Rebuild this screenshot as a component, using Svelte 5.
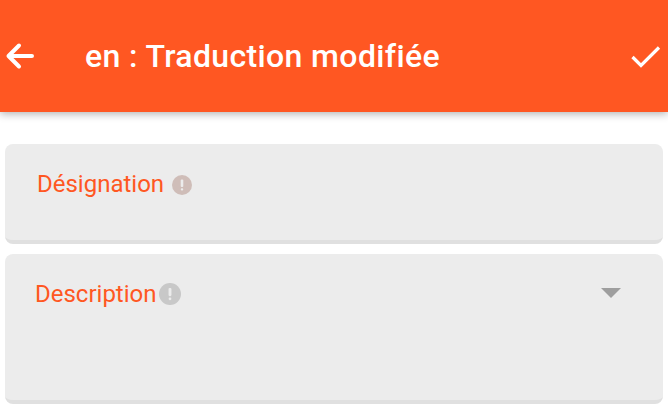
<script lang="ts">
  const title = 'en : Traduction modifiée';
</script>

<div class="page">
  <header class="toolbar">
    <button class="icon-btn back" aria-label="Retour">
      <svg width="30" height="28" viewBox="0 0 30 28">
        <path d="M3.5 14H27M14 3.5L3.5 14L14 24.5" fill="none" stroke="#fff" stroke-width="4" stroke-linecap="round" stroke-linejoin="round" />
      </svg>
    </button>
    <h1>{title}</h1>
    <button class="icon-btn check" aria-label="Valider">
      <svg width="30" height="24" viewBox="0 0 30 24">
        <path d="M1.5 12L10 20.5L28 2.5" fill="none" stroke="#fff" stroke-width="3.2" />
      </svg>
    </button>
  </header>

  <div class="form">
    <div class="field first">
      <span class="label">Désignation</span>
      <svg class="alert" width="20" height="20" viewBox="0 0 20 20">
        <circle cx="10" cy="10" r="10" fill="#cfbdb8" />
        <rect x="8.7" y="4.5" width="2.6" height="7.5" rx="1" fill="#ececec" />
        <rect x="8.8" y="13.2" width="2.4" height="2.4" rx="1" fill="#ececec" />
      </svg>
    </div>
    <div class="field second">
      <span class="label">Description</span>
      <svg class="alert" width="22" height="22" viewBox="0 0 20 20">
        <circle cx="10" cy="10" r="10" fill="#c8c8c8" />
        <rect x="8.7" y="4.5" width="2.6" height="7.5" rx="1" fill="#ececec" />
        <rect x="8.8" y="13.2" width="2.4" height="2.4" rx="1" fill="#ececec" />
      </svg>
      <span class="caret"></span>
    </div>
  </div>
</div>

<style>
  :global(body) {
    margin: 0;
    background: #fff;
    overflow: hidden;
  }

  .page {
    width: 668px;
    height: 407px;
    overflow: hidden;
    font-family: Roboto, "Noto Sans", sans-serif;
  }

  .toolbar {
    height: 112px;
    background: #ff5722;
    color: #fff;
    display: flex;
    align-items: flex-start;
    box-shadow: 0 2px 8px rgba(0, 0, 0, 0.3);
  }

  .toolbar h1 {
    flex: 1;
    margin: 0;
    margin-left: 50px;
    padding-top: 38px;
    font-size: 32px;
    line-height: 36px;
    font-weight: 500;
    letter-spacing: 0.37px;
  }

  .icon-btn {
    border: 0;
    padding: 0;
    background: none;
    display: flex;
  }

  .back {
    margin: 42px 0 0 5px;
  }

  .check {
    margin: 45px 7px 0 0;
  }

  .form {
    padding: 32px 5px 0;
    display: flex;
    flex-direction: column;
    gap: 10px;
  }

  .field {
    background: #ececec;
    border-radius: 8px;
    border-bottom: 4px solid #e0e0e0;
    box-sizing: border-box;
    display: flex;
    align-self: stretch;
    align-items: flex-start;
    font-size: 24px;
    color: #ff5722;
  }

  .first {
    height: 100px;
    padding: 26px 0 0 32px;
  }

  .second {
    height: 150px;
    padding: 26px 0 0 30px;
    position: relative;
  }

  .label {
    line-height: 28px;
  }

  .alert {
    margin-top: 5px;
  }

  .first .alert {
    margin-left: 8px;
  }

  .second .alert {
    margin-left: 2px;
    margin-top: 3px;
  }

  .caret {
    position: absolute;
    right: 42px;
    top: 34px;
    border-left: 10px solid transparent;
    border-right: 10px solid transparent;
    border-top: 10px solid #9e9e9e;
  }
</style>
